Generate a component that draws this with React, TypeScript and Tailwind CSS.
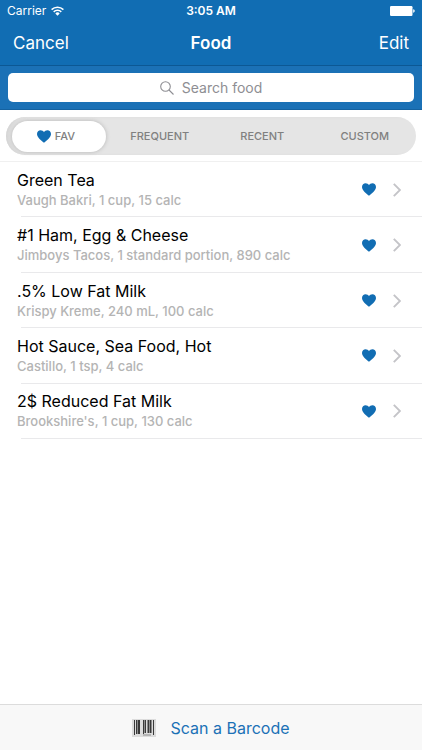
const foods = [
  { name: "Green Tea", detail: "Vaugh Bakri, 1 cup, 15 calc" },
  { name: "#1 Ham, Egg & Cheese", detail: "Jimboys Tacos, 1 standard portion, 890 calc" },
  { name: ".5% Low Fat Milk", detail: "Krispy Kreme, 240 mL, 100 calc" },
  { name: "Hot Sauce, Sea Food, Hot", detail: "Castillo, 1 tsp, 4 calc" },
  { name: "2$ Reduced Fat Milk", detail: "Brookshire's, 1 cup, 130 calc" },
];

function Heart() {
  return (
    <svg viewBox="0 0 14 13" className="h-[13px] w-[14px] shrink-0 fill-[#116db3]" aria-hidden="true">
      <path d="M7 12.8C4.6 10.8 0 7.7 0 4.1 0 1.8 1.6.3 3.6.3 5 .3 6.3 1 7 2.2 7.7 1 9 .3 10.4.3 12.4.3 14 1.8 14 4.1 14 7.7 9.4 10.8 7 12.8Z" />
    </svg>
  );
}

function Chevron() {
  return (
    <svg viewBox="0 0 8 14" className="h-[14px] w-2 shrink-0" fill="none" stroke="#c4c4c8" strokeWidth="1.9" aria-hidden="true">
      <path d="M.8.8 7 7 .8 13.2" />
    </svg>
  );
}

function Barcode() {
  return (
    <svg viewBox="0 0 24 18" className="h-[18px] w-6" aria-hidden="true">
      <path fill="#dcdcdc" d="M0 0h24v18H0z" />
      <path
        fill="#3a3a3a"
        d="M2 1h1v15H2zM4 1h1v14H4zM6 1h2v14H6zM11 1h1v14h-1zM13 1h1v13h-1zM16 1h1v13h-1zM18 1h1v13h-1zM21 1h1v15h-1z"
      />
      <path fill="#8d8d8d" d="M5 1h1v14H5zM12 1h1v13h-1zM15 1h1v13h-1zM17 1h1v13h-1zM19 1h1v13h-1zM11 15.5h8v1h-8z" />
    </svg>
  );
}

function StatusBar() {
  return (
    <div className="grid h-[22px] grid-cols-3 items-center px-[7px] text-xs">
      <div className="flex items-center gap-[5px]">
        <span>Carrier</span>
        <svg viewBox="0 0 13 10" className="h-[10px] w-[13px]" fill="none" stroke="white" strokeWidth="1.5" aria-hidden="true">
          <path d="M.6 3.6a8.5 8.5 0 0 1 11.8 0M2.7 5.9a5.4 5.4 0 0 1 7.6 0" />
          <path d="M4.3 7.4a3.2 3.2 0 0 1 4.4 0L6.5 9.7Z" fill="white" stroke="none" />
        </svg>
      </div>
      <span className="text-center font-semibold">3:05 AM</span>
      <svg viewBox="0 0 25 10" className="h-[10px] w-[25px] justify-self-end" fill="white" aria-hidden="true">
        <rect width="22.5" height="10" rx="1.2" />
        <path d="M23.2 3.3c1 .2 1.5.8 1.5 1.7s-.5 1.5-1.5 1.7Z" />
      </svg>
    </div>
  );
}

export default function App() {
  return (
    <div className="flex min-h-screen flex-col bg-white font-['Inter',sans-serif]">
      <header className="bg-[#116db3] text-white">
        <StatusBar />
        <nav className="grid h-11 grid-cols-3 items-center border-b border-[#0c5894] px-[13px] text-[17px]">
          <button className="justify-self-start">Cancel</button>
          <h1 className="text-center font-semibold">Food</h1>
          <button className="justify-self-end">Edit</button>
        </nav>
        <div className="border-b border-[#1562a0] bg-[#1b71b6] px-2 py-[7px]">
          <label className="flex h-[29px] items-center justify-center gap-2 rounded-[5px] bg-white text-sm text-[#8e8e93]">
            <svg viewBox="0 0 14 14" className="size-[14px]" fill="none" stroke="currentColor" strokeWidth="1.1" aria-hidden="true">
              <circle cx="5.5" cy="5.5" r="4.8" />
              <path d="m9 9 4.500 4.500" />
            </svg>
            <input
              type="text"
              aria-label="Search food"
              placeholder="Search food"
              className="[field-sizing:content] outline-none placeholder:text-[#8e8e93]"
            />
          </label>
        </div>
      </header>

      <div className="border-b border-[#f0f0f0] px-[6px] pt-[7px] pb-[6px]">
        <div className="grid h-[38px] grid-cols-4 items-center rounded-full bg-[#e5e5e5] text-[11px] font-medium text-[#808080] shadow-[inset_4px_0_4px_-2px_#d0d0d0]">
          <button className="ml-[6px] flex h-[31px] w-[94px] items-center justify-center gap-1 rounded-full bg-white pr-[6px] shadow-[0_0_4px_#b4b4b4]">
            <Heart />
            FAV
          </button>
          <button>FREQUENT</button>
          <button>RECENT</button>
          <button>CUSTOM</button>
        </div>
      </div>

      <ul className="flex h-[277px] flex-col">
        {foods.map((food) => (
          <li key={food.name} className="flex flex-1 pl-[17px]">
            <div className="relative flex flex-1 items-center pr-[21px] after:absolute after:right-0 after:bottom-0 after:left-1 after:h-px after:bg-[#e9e9eb]">
              <div className="flex-1">
                <p className="text-base leading-5 text-black">{food.name}</p>
                <p className="text-[13px] leading-5 font-medium text-[#b4b4b4]">{food.detail}</p>
              </div>
              <button aria-label="Favorite" className="mr-[17px]">
                <Heart />
              </button>
              <Chevron />
            </div>
          </li>
        ))}
      </ul>

      <footer className="mt-auto border-t border-[#dcdcdc] bg-[#f8f8f8]">
        <button className="flex h-[45px] w-full items-center justify-center gap-[14px] text-base text-[#1b71b6]">
          <Barcode />
          Scan a Barcode
        </button>
      </footer>
    </div>
  );
}
